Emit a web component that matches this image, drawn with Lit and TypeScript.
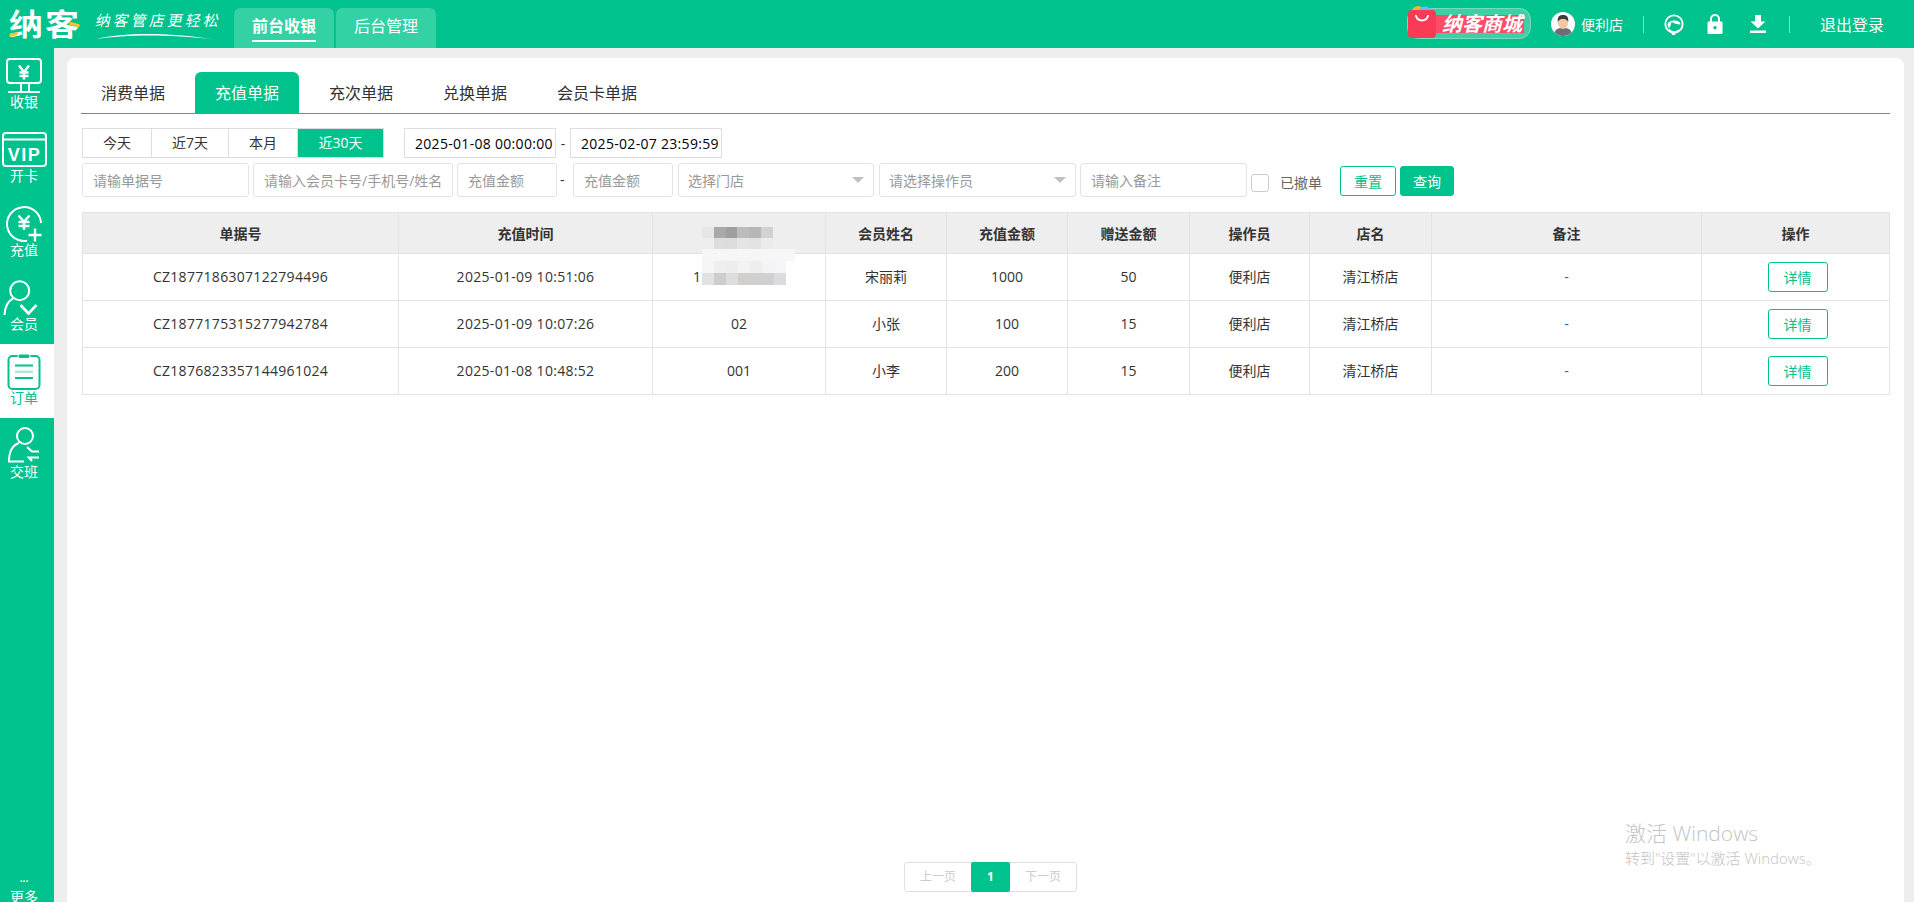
import { LitElement, css, html, svg } from 'lit';
import { customElement } from 'lit/decorators.js';

const NAV = [
  {
    label: '收银',
    icon: svg`<rect x="7" y="11" width="34" height="24" rx="3"/><path d="M21 35v8M29 35v8M8 44h32"/><path d="M19 17.5l5 6.5 5-6.5M19.5 24.5h9M19.5 28h9M24 24v7.5" stroke-width="2.4"/>`,
  },
  {
    label: '开卡',
    icon: svg`<rect x="3" y="11" width="43" height="33" rx="3"/><path d="M3 17.5h43"/><text x="24.5" y="38.5" class="vip">VIP</text>`,
  },
  {
    label: '充值',
    icon: svg`<path d="M41 27A17 17 0 1 0 27 44.8"/><path d="M18.5 19.5l5.5 6 5.5-6M18.5 26h11M18.5 30h11M24 26v8" stroke-width="2.4"/><path d="M28.5 39h13M35 32.5v13" stroke-width="2.4"/>`,
  },
  {
    label: '会员',
    icon: svg`<circle cx="19.7" cy="20.7" r="9.5"/><path d="M13 28.5C8 31 5 37 4.5 45"/><path d="M20.5 35l8 8.5 8-8.5" stroke-width="2.6"/>`,
  },
  {
    label: '订单',
    icon: svg`<rect x="8.5" y="12" width="31" height="33" rx="4"/><rect class="fill" x="18" y="10" width="12" height="4.5" rx="2"/><path d="M15 21.5h18M15 34h18"/><path d="M15 27.8h18" stroke-opacity=".35" stroke-width="2.5"/>`,
  },
  {
    label: '交班',
    icon: svg`<circle cx="25" cy="18" r="8"/><path d="M19 25C13 27 9 33 9 43.5H24"/><path d="M27 29l5 4.5h7M39 39.5H29l3 3.5" stroke-width="2.2"/>`,
  },
];

const TABS = ['消费单据', '充值单据', '充次单据', '兑换单据', '会员卡单据'];
const RANGES = ['今天', '近7天', '本月', '近30天'];
const COLUMNS = ['单据号', '充值时间', '会员卡号', '会员姓名', '充值金额', '赠送金额', '操作员', '店名', '备注', '操作'];

const ROWS = [
  ['CZ1877186307122794496', '2025-01-09 10:51:06', '1', '宋丽莉', '1000', '50'],
  ['CZ1877175315277942784', '2025-01-09 10:07:26', '02', '小张', '100', '15'],
  ['CZ1876823357144961024', '2025-01-08 10:48:52', '001', '小李', '200', '15'],
];

// the blurred-out card number, tile by tile
const MOSAIC = [
  { h: 11, tiles: ['#e6e6e6', '#a9a9a9', '#9f9f9f', '#bcbcbc', '#b6b6b6', '#d2d2d2'], w: 11.8 },
  { h: 11, tiles: ['#eeeeee', '#dddddd', '#dcdcdc', '#e5e5e5', '#e3e3e3', '#ebebeb'], w: 11.8 },
  { h: 12, tiles: ['#f6f6f6'], w: 93 },
  { h: 12, tiles: ['#f5f5f5', '#eeeeee', '#ededed', '#f3f3f3', '#eeeeee', '#f4f4f6', '#f5f5f7'], w: 12 },
  { h: 12, tiles: ['#e1e1e1', '#cdcdcd', '#dedcdc', '#d3cecc', '#cfcfcf', '#d0d0d0', '#dcdce0'], w: 12 },
];

@customElement('app-root')
export class AppRoot extends LitElement {
  render() {
    return html`
      <div class="top">
        <div class="brand">
          <span class="logo"><span class="logo-text">纳客</span><i class="dash one"></i><i class="dash two"></i></span>
          <span class="slogan">
            <span class="slogan-text">纳客管店更轻松</span>
            <svg class="swoosh" width="126" height="10" viewBox="0 0 126 10">
              <path d="M1 8C30 1.500 70 1 120 8.500C72 3 32 3.500 1 8z" fill="#fff" />
            </svg>
          </span>
        </div>
        <div class="top-tab on"><span>前台收银</span></div>
        <div class="top-tab"><span>后台管理</span></div>
        <div class="top-right">
          <div class="shop">
            <span class="shop-name">纳客商城</span>
            <svg class="bag" width="31" height="33" viewBox="0 0 31 33">
              <circle cx="11" cy="7.500" r="6.500" fill="#f4b43c" />
              <circle cx="18" cy="8.500" r="7" fill="#5cc0f0" />
              <rect x="1" y="5" width="28" height="28" rx="4" fill="#fb3a58" />
              <path d="M9 11c2 6 10 6 12 0" fill="none" stroke="#fff" stroke-width="2" stroke-linecap="round" />
            </svg>
          </div>
          <svg class="avatar" width="24" height="24" viewBox="0 0 24 24">
            <circle cx="12" cy="12" r="12" fill="#fff" />
            <path d="M3.500 20.500C5 16.500 8 16 12 16s7 .5 8.500 4.500A12 12 0 0 1 3.500 20.500z" fill="#6d6d79" />
            <ellipse cx="12" cy="11" rx="5" ry="6" fill="#f4c6a4" />
            <path d="M6.800 10C6 4 9 3 12 3s6 1 5.200 7C16 7.500 14 7 12 7s-4 .5-5.200 3z" fill="#3c3c3e" />
          </svg>
          <span class="user">便利店</span>
          <i class="sep"></i>
          <svg class="tool" width="20" height="21" viewBox="0 0 20 21" fill="none" stroke="#fff">
            <circle cx="10" cy="10" r="8.700" stroke-width="1.800" />
            <path d="M3.500 11C3.500 5 16.500 5 16.500 10.500 13 10.500 9.500 9 7.500 8 7 11 6 13 5 14.500z" fill="#fff" stroke="none" />
            <path d="M5 15.500c2 3 8 3.500 10 .5" stroke-width="1.500" />
            <rect x="7.500" y="18" width="4" height="3" rx="1.500" fill="#fff" stroke="none" />
          </svg>
          <svg class="tool lock" width="16" height="20" viewBox="0 0 16 20">
            <path d="M4 8V5a4 4 0 0 1 8 0v3" fill="none" stroke="#fff" stroke-width="2" />
            <path fill-rule="evenodd" d="M1.500 7.500h13a1 1 0 0 1 1 1V19a1 1 0 0 1-1 1h-13a1 1 0 0 1-1-1V8.500a1 1 0 0 1 1-1zM8 12a1.700 1.700 0 1 0 0 3.400A1.700 1.700 0 0 0 8 12z" fill="#fff" />
          </svg>
          <svg class="tool down" width="16" height="18" viewBox="0 0 16 18">
            <path d="M5 0h6v6.500h4.500L8 13.500.5 6.500H5z" fill="#fff" />
            <rect x="0" y="15.500" width="16" height="2.500" fill="#fff" />
          </svg>
          <i class="sep last"></i>
          <span class="logout">退出登录</span>
        </div>
      </div>

      <div class="body">
        <nav class="side">
          ${NAV.map(
            (n) => html`
              <div class="nav-item ${n.label === '订单' ? 'on' : ''}">
                <svg class="nav-icon" width="48" height="46" viewBox="0 0 48 46">${n.icon}</svg>
                <span>${n.label}</span>
              </div>
            `
          )}
          <div class="nav-item more">
            <span class="dots">...</span>
            <span>更多</span>
          </div>
        </nav>

        <main class="main">
          <section class="card">
            <div class="tabs">
              ${TABS.map((t) => html`<div class="tab ${t === '充值单据' ? 'on' : ''}">${t}</div>`)}
            </div>

            <div class="row-dates">
              <div class="ranges">
                ${RANGES.map((r) => html`<div class="range ${r === '近30天' ? 'on' : ''}">${r}</div>`)}
              </div>
              <input class="date" .value=${'2025-01-08 00:00:00'} />
              <span class="date-dash">-</span>
              <input class="date" .value=${'2025-02-07 23:59:59'} />
            </div>

            <div class="row-filters">
              <input class="field w167" placeholder="请输单据号" />
              <input class="field w200" placeholder="请输入会员卡号/手机号/姓名" />
              <input class="field w100" placeholder="充值金额" />
              <span class="amount-dash">-</span>
              <input class="field w100" placeholder="充值金额" />
              <div class="field select w196">选择门店<i class="caret"></i></div>
              <div class="field select w197">请选择操作员<i class="caret"></i></div>
              <input class="field w167" placeholder="请输入备注" />
              <i class="check"></i>
              <span class="check-label">已撤单</span>
              <button class="btn ghost">重置</button>
              <button class="btn solid">查询</button>
            </div>

            <div class="table-wrap">
              <table>
                <colgroup>${COLUMNS.map(() => html`<col />`)}</colgroup>
                <thead>
                  <tr>${COLUMNS.map((c) => html`<th>${c}</th>`)}</tr>
                </thead>
                <tbody>
                  ${ROWS.map(
                    (r, i) => html`
                      <tr>
                        <td class="num">${r[0]}</td>
                        <td class="num">${r[1]}</td>
                        <td>${r[2]}${i === 0 ? html`<span class="masked"></span>` : ''}</td>
                        <td>${r[3]}</td>
                        <td>${r[4]}</td>
                        <td>${r[5]}</td>
                        <td>便利店</td>
                        <td>清江桥店</td>
                        <td class="remark">-</td>
                        <td class="action"><button class="detail">详情</button></td>
                      </tr>
                    `
                  )}
                </tbody>
              </table>
              <div class="mosaic">
                ${MOSAIC.map(
                  (m) => html`<div class="mosaic-row" style="height:${m.h}px">
                    ${m.tiles.map((c) => html`<i style="width:${m.w}px;background:${c}"></i>`)}
                  </div>`
                )}
              </div>
            </div>

            <div class="pager">
              <div class="pages">
                <span class="page">上一页</span>
                <span class="page on">1</span>
                <span class="page">下一页</span>
              </div>
            </div>
          </section>
        </main>
      </div>

      <div class="watermark">
        <div class="wm-big">激活 Windows</div>
        <div class="wm-small">转到"设置"以激活 Windows。</div>
      </div>
    `;
  }

  static styles = css`
    :host {
      display: flex;
      flex-direction: column;
      position: relative;
      height: 902px;
      overflow: hidden;
      font-family: 'Open Sans', 'Noto Sans CJK SC', sans-serif;
      font-size: 14px;
      color: #333;
      background: #eee;
    }

    .top {
      display: flex;
      align-items: flex-end;
      height: 48px;
      flex: none;
      background: #00c28c;
      color: #fff;
    }
    .brand {
      display: flex;
      align-items: center;
      width: 234px;
      height: 48px;
      padding-left: 9px;
      box-sizing: border-box;
    }
    .logo {
      position: relative;
      display: block;
      width: 72px;
      height: 28px;
    }
    .logo-text {
      display: block;
      font-size: 34px;
      font-weight: 700;
      line-height: 28px;
      letter-spacing: 2px;
      white-space: nowrap;
      transform: scaleY(0.86);
    }
    .dash {
      position: absolute;
      height: 3px;
      background: #f7c325;
      border-radius: 2px;
    }
    .dash.one {
      left: 0;
      top: 23px;
      width: 9px;
      transform: rotate(-18deg);
    }
    .dash.two {
      left: 60px;
      top: 13px;
      width: 11px;
      transform: rotate(14deg);
    }
    .slogan {
      position: relative;
      margin-left: 14px;
      height: 48px;
      width: 126px;
    }
    .slogan-text {
      position: absolute;
      left: 1px;
      top: 10px;
      font-size: 15px;
      line-height: 20px;
      letter-spacing: 3px;
      white-space: nowrap;
      transform: skewX(-12deg);
    }
    .swoosh {
      position: absolute;
      left: 0;
      top: 31px;
    }
    .top-tab {
      display: flex;
      justify-content: center;
      width: 100px;
      height: 40px;
      margin-right: 2px;
      background: #33d1a3;
      border-radius: 6px 6px 0 0;
      font-size: 16px;
    }
    .top-tab span {
      height: 32px;
      line-height: 36px;
    }
    .top-tab.on span {
      font-weight: 700;
      border-bottom: 2px solid #fff;
    }
    .top-right {
      display: flex;
      align-items: center;
      height: 48px;
      margin-left: auto;
      padding-right: 30px;
    }
    .shop {
      position: relative;
      width: 124px;
      height: 31px;
      margin-right: 20px;
      margin-top: -1px;
      box-sizing: border-box;
      background: rgba(255, 255, 255, 0.24);
      border: 1px solid rgba(255, 255, 255, 0.28);
      border-radius: 12px;
    }
    .bag {
      position: absolute;
      left: -1px;
      top: -4px;
    }
    .shop-name {
      position: absolute;
      left: 27px;
      top: 6px;
      height: 18px;
      padding: 0 2px 0 7px;
      background: #fb4c68;
      font-size: 20px;
      font-weight: 700;
      font-style: italic;
      line-height: 18px;
      white-space: nowrap;
      color: #fff;
    }
    .avatar {
      flex: none;
    }
    .user {
      margin-left: 6px;
      font-size: 14px;
    }
    .sep {
      width: 1px;
      height: 17px;
      margin: 0 20px;
      background: rgba(255, 255, 255, 0.5);
    }
    .sep.last {
      margin: 0 30px 0 23px;
    }
    .tool.lock {
      margin-left: 23px;
    }
    .tool.down {
      margin-left: 27px;
    }
    .logout {
      font-size: 16px;
    }

    .body {
      display: flex;
      flex: 1;
      min-height: 0;
    }
    .side {
      display: flex;
      flex-direction: column;
      flex: none;
      width: 54px;
      background: #00c28c;
    }
    .nav-item {
      display: flex;
      flex-direction: column;
      flex: none;
      height: 74px;
      padding-right: 6px;
      text-align: center;
      color: #fff;
      line-height: 16px;
    }
    .nav-item.on {
      background: #fff;
      color: #00c28c;
    }
    .nav-icon {
      display: block;
      fill: none;
      stroke: currentColor;
      stroke-width: 2;
    }
    .nav-icon .fill {
      fill: currentColor;
      stroke: #fff;
      stroke-width: 1;
    }
    .nav-icon .vip {
      fill: currentColor;
      stroke: none;
      font-family: 'Liberation Sans', sans-serif;
      font-size: 18px;
      font-weight: 700;
      letter-spacing: 1.5px;
      text-anchor: middle;
    }
    .nav-item.more {
      margin-top: auto;
      margin-bottom: -17px;
      padding-top: 28px;
      height: 46px;
    }
    .dots {
      height: 16px;
      font-size: 10px;
      line-height: 10px;
      font-weight: 700;
    }

    .main {
      flex: 1;
      min-width: 0;
      padding: 10px 10px 0 13px;
    }
    .card {
      display: flex;
      flex-direction: column;
      height: 100%;
      box-sizing: border-box;
      padding: 14px 14px 0;
      background: #fff;
      border-radius: 8px 8px 0 0;
    }

    .tabs {
      display: flex;
      gap: 10px;
      flex: none;
      height: 42px;
      box-sizing: border-box;
      border-bottom: 1px solid #1eb98b;
    }
    .tab {
      padding: 0 20px;
      font-size: 16px;
      line-height: 43px;
      color: #333;
      border-radius: 6px 6px 0 0;
    }
    .tab.on {
      background: #00c28c;
      color: #fff;
    }

    .row-dates {
      display: flex;
      align-items: center;
      height: 30px;
      margin: 14px 0 0 1px;
    }
    .ranges {
      display: flex;
      height: 30px;
      box-sizing: border-box;
      border: 1px solid #ddd;
      margin-right: 20px;
    }
    .range {
      width: 69px;
      box-sizing: border-box;
      text-align: center;
      line-height: 28px;
      border-left: 1px solid #ddd;
    }
    .range:first-child {
      width: 68px;
      border-left: 0;
    }
    .range:nth-child(2) {
      width: 77px;
    }
    .range:nth-child(4) {
      width: 86px;
    }
    .range.on {
      background: #00c28c;
      color: #fff;
    }
    .date {
      width: 152px;
      height: 30px;
      box-sizing: border-box;
      padding: 0 0 0 10px;
      border: 1px solid #ddd;
      outline: 0;
      font: inherit;
      letter-spacing: 0.3px;
      color: #000;
    }
    .date-dash {
      width: 14px;
      text-align: center;
    }

    .row-filters {
      display: flex;
      align-items: center;
      gap: 4px;
      height: 34px;
      margin: 5px 0 0 1px;
    }
    .field {
      display: block;
      height: 34px;
      box-sizing: border-box;
      padding: 1px 10px 0;
      border: 1px solid #e3e3e3;
      border-radius: 3px;
      outline: 0;
      font: inherit;
      color: #999;
      background: #fff;
      flex: none;
    }
    .field::placeholder {
      color: #999;
    }
    .w100 {
      width: 100px;
    }
    .w167 {
      width: 167px;
    }
    .w196 {
      width: 196px;
    }
    .w197 {
      width: 197px;
    }
    .w200 {
      width: 200px;
      padding-right: 0;
    }
    .amount-dash {
      width: 8px;
      text-indent: -1px;
      margin-top: -2px;
    }
    .select {
      position: relative;
      padding-left: 9px;
      line-height: 32px;
    }
    .select + .select,
    .amount-dash + .field + .select {
      margin-left: 1px;
    }
    .caret {
      position: absolute;
      right: 9px;
      top: 13px;
      border-left: 6px solid transparent;
      border-right: 6px solid transparent;
      border-top: 6px solid #c0c0c0;
    }
    .check {
      flex: none;
      width: 18px;
      height: 18px;
      box-sizing: border-box;
      margin-top: 6px;
      border: 1px solid #ccc;
      border-radius: 3px;
    }
    .check-label {
      margin: 4px 14px 0 7px;
      color: #666;
      white-space: nowrap;
    }
    .btn {
      width: 56px;
      height: 30px;
      padding: 0;
      margin-top: 2px;
      flex: none;
      border: 1px solid #00c28c;
      border-radius: 3px;
      font: inherit;
    }
    .btn.ghost {
      background: #fff;
      color: #00c28c;
    }
    .btn.solid {
      width: 54px;
      background: #00c28c;
      color: #fff;
    }

    .table-wrap {
      position: relative;
      margin: 15px 0 0 1px;
      width: 1807px;
    }
    table {
      table-layout: fixed;
      border-collapse: collapse;
      width: 1807px;
    }
    col:nth-child(1) {
      width: 316px;
    }
    col:nth-child(2) {
      width: 254px;
    }
    col:nth-child(3) {
      width: 173px;
    }
    col:nth-child(4),
    col:nth-child(5) {
      width: 121px;
    }
    col:nth-child(6),
    col:nth-child(8) {
      width: 122px;
    }
    col:nth-child(7) {
      width: 120px;
    }
    col:nth-child(9) {
      width: 270px;
    }
    col:nth-child(10) {
      width: 188px;
    }
    th,
    td {
      padding: 0;
      border: 1px solid #e3e3e3;
      text-align: center;
      font-size: 14px;
      color: #333;
    }
    th {
      height: 40px;
      background: #eee;
      font-weight: 700;
    }
    td {
      height: 44px;
      padding-bottom: 2px;
    }
    td.action {
      height: 46px;
      padding-bottom: 0;
    }
    .num {
      letter-spacing: 0.3px;
    }
    .remark {
      color: #1a68b8;
    }
    .masked {
      display: inline-block;
      width: 84px;
    }
    .detail {
      display: block;
      width: 60px;
      height: 30px;
      margin: 0 auto;
      position: relative;
      left: 2px;
      padding: 0;
      border: 1px solid #00c28c;
      border-radius: 3px;
      background: #fff;
      color: #00c28c;
      font: inherit;
    }
    .mosaic {
      position: absolute;
      left: 620px;
      top: 15px;
    }
    .mosaic-row {
      display: flex;
    }
    .mosaic-row i {
      display: block;
      flex: none;
    }

    .pager {
      display: flex;
      justify-content: center;
      margin-top: auto;
      margin-bottom: 10px;
      padding-left: 10px;
    }
    .pages {
      display: flex;
      height: 30px;
      box-sizing: border-box;
      border: 1px solid #e0e0e0;
      border-radius: 3px;
    }
    .page {
      width: 66px;
      text-align: center;
      font-size: 12px;
      line-height: 28px;
      color: #ccc;
    }
    .page.on {
      width: 39px;
      margin: -1px 0;
      line-height: 30px;
      background: #00c28c;
      color: #fff;
      border-radius: 2px;
      font-weight: 700;
    }

    .watermark {
      position: absolute;
      left: 1625px;
      top: 819px;
      color: #c4c4c4;
      pointer-events: none;
    }
    .wm-big {
      font-size: 21px;
      line-height: 28px;
      font-weight: 300;
    }
    .wm-small {
      margin-top: 1px;
      font-size: 15px;
      line-height: 20px;
      font-weight: 300;
    }
  `;
}
